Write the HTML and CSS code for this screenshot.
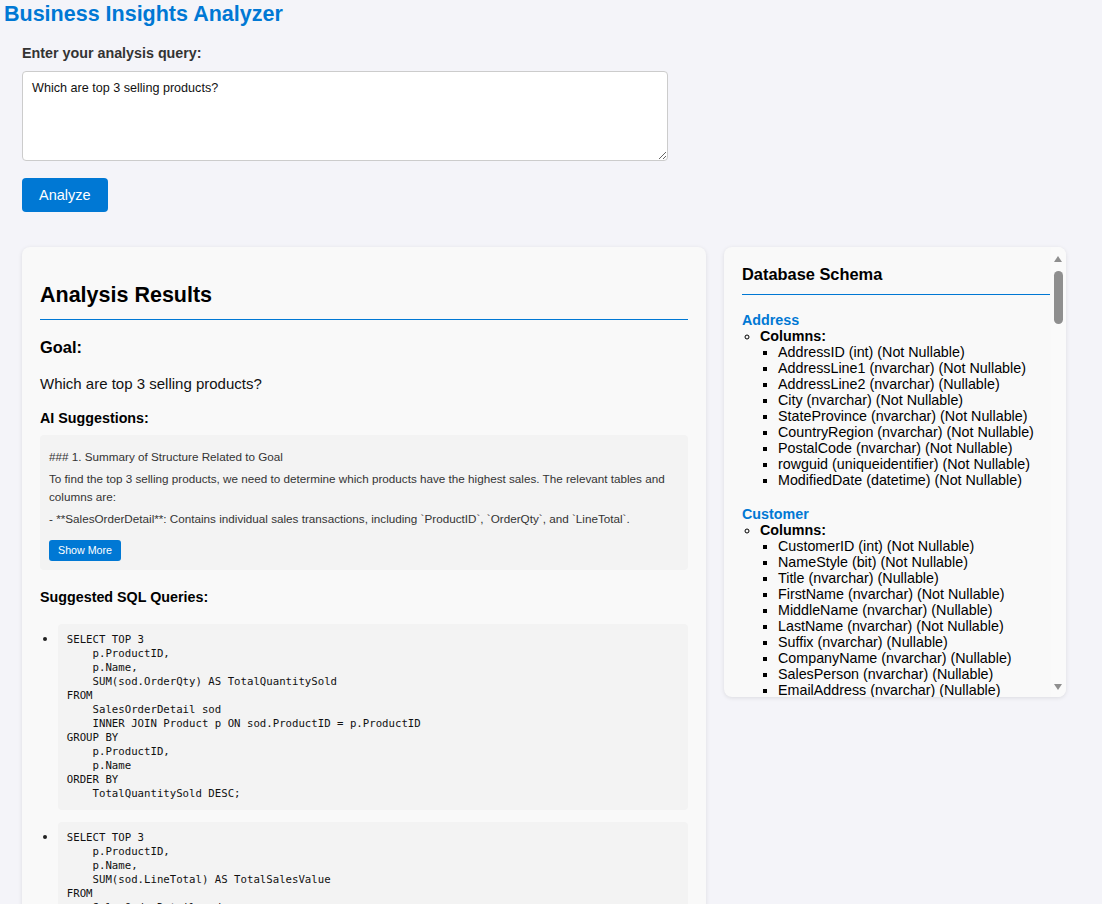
FILE: index.html
```html
<!DOCTYPE html>
<html lang="en">
<head>
<meta charset="utf-8">
<title>Business Insights Analyzer</title>
<link rel="stylesheet" href="styles.css">
</head>
<body>
<h1 class="app-title">Business Insights Analyzer</h1>
<div class="wrapper">
  <div class="query-form">
    <label class="query-label" for="q">Enter your analysis query:</label>
    <textarea id="q" class="query-input">Which are top 3 selling products?</textarea>
    <button class="analyze-btn">Analyze</button>
  </div>

  <div class="panels">
    <section class="card results">
      <h2 class="results-title">Analysis Results</h2>
      <h3 class="goal-title">Goal:</h3>
      <p class="goal-text">Which are top 3 selling products?</p>
      <h4 class="sub-title ai-title">AI Suggestions:</h4>
      <div class="suggestion-box">
        <p>### 1. Summary of Structure Related to Goal</p>
        <p>To find the top 3 selling products, we need to determine which products have the highest sales. The relevant tables and columns are:</p>
        <p>- **SalesOrderDetail**: Contains individual sales transactions, including `ProductID`, `OrderQty`, and `LineTotal`.</p>
        <button class="show-more">Show More</button>
      </div>
      <h4 class="sub-title sql-title">Suggested SQL Queries:</h4>
      <ul class="sql-list">
        <li><pre class="sql">SELECT TOP 3
    p.ProductID,
    p.Name,
    SUM(sod.OrderQty) AS TotalQuantitySold
FROM
    SalesOrderDetail sod
    INNER JOIN Product p ON sod.ProductID = p.ProductID
GROUP BY
    p.ProductID,
    p.Name
ORDER BY
    TotalQuantitySold DESC;</pre></li>
        <li><pre class="sql">SELECT TOP 3
    p.ProductID,
    p.Name,
    SUM(sod.LineTotal) AS TotalSalesValue
FROM
    SalesOrderDetail sod
    INNER JOIN Product p ON sod.ProductID = p.ProductID
GROUP BY
    p.ProductID,
    p.Name
ORDER BY
    TotalSalesValue DESC;</pre></li>
      </ul>
    </section>

    <aside class="card schema">
      <div class="schema-scroll">
        <h3 class="schema-title">Database Schema</h3>

        <div class="table">
          <h4 class="table-name">Address</h4>
          <ul class="col-group"><li><strong>Columns:</strong>
            <ul class="cols">
              <li>AddressID (int) (Not Nullable)</li>
              <li>AddressLine1 (nvarchar) (Not Nullable)</li>
              <li>AddressLine2 (nvarchar) (Nullable)</li>
              <li>City (nvarchar) (Not Nullable)</li>
              <li>StateProvince (nvarchar) (Not Nullable)</li>
              <li>CountryRegion (nvarchar) (Not Nullable)</li>
              <li>PostalCode (nvarchar) (Not Nullable)</li>
              <li>rowguid (uniqueidentifier) (Not Nullable)</li>
              <li>ModifiedDate (datetime) (Not Nullable)</li>
            </ul></li></ul>
        </div>

        <div class="table">
          <h4 class="table-name">Customer</h4>
          <ul class="col-group"><li><strong>Columns:</strong>
            <ul class="cols">
              <li>CustomerID (int) (Not Nullable)</li>
              <li>NameStyle (bit) (Not Nullable)</li>
              <li>Title (nvarchar) (Nullable)</li>
              <li>FirstName (nvarchar) (Not Nullable)</li>
              <li>MiddleName (nvarchar) (Nullable)</li>
              <li>LastName (nvarchar) (Not Nullable)</li>
              <li>Suffix (nvarchar) (Nullable)</li>
              <li>CompanyName (nvarchar) (Nullable)</li>
              <li>SalesPerson (nvarchar) (Nullable)</li>
              <li>EmailAddress (nvarchar) (Nullable)</li>
              <li>Phone (nvarchar) (Nullable)</li>
              <li>PasswordHash (varchar) (Not Nullable)</li>
              <li>PasswordSalt (varchar) (Not Nullable)</li>
              <li>rowguid (uniqueidentifier) (Not Nullable)</li>
              <li>ModifiedDate (datetime) (Not Nullable)</li>
            </ul></li></ul>
        </div>

        <div class="table">
          <h4 class="table-name">CustomerAddress</h4>
          <ul class="col-group"><li><strong>Columns:</strong>
            <ul class="cols">
              <li>CustomerID (int) (Not Nullable)</li>
              <li>AddressID (int) (Not Nullable)</li>
              <li>AddressType (nvarchar) (Not Nullable)</li>
              <li>rowguid (uniqueidentifier) (Not Nullable)</li>
              <li>ModifiedDate (datetime) (Not Nullable)</li>
            </ul></li></ul>
        </div>

        <div class="table">
          <h4 class="table-name">Product</h4>
          <ul class="col-group"><li><strong>Columns:</strong>
            <ul class="cols">
              <li>ProductID (int) (Not Nullable)</li>
              <li>Name (nvarchar) (Not Nullable)</li>
              <li>ProductNumber (nvarchar) (Not Nullable)</li>
              <li>Color (nvarchar) (Nullable)</li>
              <li>StandardCost (money) (Not Nullable)</li>
              <li>ListPrice (money) (Not Nullable)</li>
              <li>Size (nvarchar) (Nullable)</li>
              <li>Weight (decimal) (Nullable)</li>
              <li>ProductCategoryID (int) (Nullable)</li>
              <li>ProductModelID (int) (Nullable)</li>
              <li>SellStartDate (datetime) (Not Nullable)</li>
              <li>SellEndDate (datetime) (Nullable)</li>
              <li>DiscontinuedDate (datetime) (Nullable)</li>
              <li>ThumbNailPhoto (varbinary) (Nullable)</li>
              <li>ThumbnailPhotoFileName (nvarchar) (Nullable)</li>
              <li>rowguid (uniqueidentifier) (Not Nullable)</li>
              <li>ModifiedDate (datetime) (Not Nullable)</li>
            </ul></li></ul>
        </div>

        <div class="table">
          <h4 class="table-name">ProductCategory</h4>
          <ul class="col-group"><li><strong>Columns:</strong>
            <ul class="cols">
              <li>ProductCategoryID (int) (Not Nullable)</li>
              <li>ParentProductCategoryID (int) (Nullable)</li>
              <li>Name (nvarchar) (Not Nullable)</li>
              <li>rowguid (uniqueidentifier) (Not Nullable)</li>
              <li>ModifiedDate (datetime) (Not Nullable)</li>
            </ul></li></ul>
        </div>

        <div class="table">
          <h4 class="table-name">ProductDescription</h4>
          <ul class="col-group"><li><strong>Columns:</strong>
            <ul class="cols">
              <li>ProductDescriptionID (int) (Not Nullable)</li>
              <li>Description (nvarchar) (Not Nullable)</li>
              <li>rowguid (uniqueidentifier) (Not Nullable)</li>
              <li>ModifiedDate (datetime) (Not Nullable)</li>
            </ul></li></ul>
        </div>

        <div class="table">
          <h4 class="table-name">ProductModel</h4>
          <ul class="col-group"><li><strong>Columns:</strong>
            <ul class="cols">
              <li>ProductModelID (int) (Not Nullable)</li>
              <li>Name (nvarchar) (Not Nullable)</li>
              <li>CatalogDescription (xml) (Nullable)</li>
              <li>rowguid (uniqueidentifier) (Not Nullable)</li>
              <li>ModifiedDate (datetime) (Not Nullable)</li>
            </ul></li></ul>
        </div>

        <div class="table">
          <h4 class="table-name">ProductModelProductDescription</h4>
          <ul class="col-group"><li><strong>Columns:</strong>
            <ul class="cols">
              <li>ProductModelID (int) (Not Nullable)</li>
              <li>ProductDescriptionID (int) (Not Nullable)</li>
              <li>Culture (nchar) (Not Nullable)</li>
              <li>rowguid (uniqueidentifier) (Not Nullable)</li>
              <li>ModifiedDate (datetime) (Not Nullable)</li>
            </ul></li></ul>
        </div>

        <div class="table">
          <h4 class="table-name">SalesOrderDetail</h4>
          <ul class="col-group"><li><strong>Columns:</strong>
            <ul class="cols">
              <li>SalesOrderID (int) (Not Nullable)</li>
              <li>SalesOrderDetailID (int) (Not Nullable)</li>
              <li>OrderQty (smallint) (Not Nullable)</li>
              <li>ProductID (int) (Not Nullable)</li>
              <li>UnitPrice (money) (Not Nullable)</li>
              <li>UnitPriceDiscount (money) (Not Nullable)</li>
              <li>LineTotal (numeric) (Not Nullable)</li>
              <li>rowguid (uniqueidentifier) (Not Nullable)</li>
              <li>ModifiedDate (datetime) (Not Nullable)</li>
            </ul></li></ul>
        </div>

        <div class="table">
          <h4 class="table-name">SalesOrderHeader</h4>
          <ul class="col-group"><li><strong>Columns:</strong>
            <ul class="cols">
              <li>SalesOrderID (int) (Not Nullable)</li>
              <li>RevisionNumber (tinyint) (Not Nullable)</li>
              <li>OrderDate (datetime) (Not Nullable)</li>
              <li>DueDate (datetime) (Not Nullable)</li>
              <li>ShipDate (datetime) (Nullable)</li>
              <li>Status (tinyint) (Not Nullable)</li>
              <li>OnlineOrderFlag (bit) (Not Nullable)</li>
              <li>SalesOrderNumber (nvarchar) (Not Nullable)</li>
              <li>PurchaseOrderNumber (nvarchar) (Nullable)</li>
              <li>AccountNumber (nvarchar) (Nullable)</li>
              <li>CustomerID (int) (Not Nullable)</li>
              <li>ShipToAddressID (int) (Nullable)</li>
              <li>BillToAddressID (int) (Nullable)</li>
              <li>ShipMethod (nvarchar) (Not Nullable)</li>
              <li>CreditCardApprovalCode (varchar) (Nullable)</li>
              <li>SubTotal (money) (Not Nullable)</li>
              <li>TaxAmt (money) (Not Nullable)</li>
              <li>Freight (money) (Not Nullable)</li>
              <li>TotalDue (money) (Not Nullable)</li>
              <li>Comment (nvarchar) (Nullable)</li>
              <li>rowguid (uniqueidentifier) (Not Nullable)</li>
              <li>ModifiedDate (datetime) (Not Nullable)</li>
            </ul></li></ul>
        </div>

        <div class="table">
          <h4 class="table-name">vGetAllCategories</h4>
          <ul class="col-group"><li><strong>Columns:</strong>
            <ul class="cols">
              <li>ParentProductCategoryName (nvarchar) (Not Nullable)</li>
              <li>ProductCategoryName (nvarchar) (Nullable)</li>
              <li>ProductCategoryID (int) (Nullable)</li>
            </ul></li></ul>
        </div>

        <div class="table">
          <h4 class="table-name">vProductAndDescription</h4>
          <ul class="col-group"><li><strong>Columns:</strong>
            <ul class="cols">
              <li>ProductID (int) (Not Nullable)</li>
              <li>Name (nvarchar) (Not Nullable)</li>
              <li>ProductModel (nvarchar) (Not Nullable)</li>
              <li>Culture (nchar) (Not Nullable)</li>
              <li>Description (nvarchar) (Not Nullable)</li>
            </ul></li></ul>
        </div>

        <div class="table">
          <h4 class="table-name">vProductModelCatalogDescription</h4>
          <ul class="col-group"><li><strong>Columns:</strong>
            <ul class="cols">
              <li>ProductModelID (int) (Not Nullable)</li>
              <li>Name (nvarchar) (Not Nullable)</li>
              <li>Summary (nvarchar) (Nullable)</li>
              <li>Manufacturer (nvarchar) (Nullable)</li>
              <li>Copyright (nvarchar) (Nullable)</li>
              <li>ProductURL (nvarchar) (Nullable)</li>
              <li>WarrantyPeriod (nvarchar) (Nullable)</li>
              <li>WarrantyDescription (nvarchar) (Nullable)</li>
              <li>NoOfYears (nvarchar) (Nullable)</li>
              <li>MaintenanceDescription (nvarchar) (Nullable)</li>
              <li>Wheel (nvarchar) (Nullable)</li>
              <li>Saddle (nvarchar) (Nullable)</li>
              <li>Pedal (nvarchar) (Nullable)</li>
              <li>BikeFrame (nvarchar) (Nullable)</li>
              <li>Crankset (nvarchar) (Nullable)</li>
              <li>PictureAngle (nvarchar) (Nullable)</li>
              <li>PictureSize (nvarchar) (Nullable)</li>
              <li>ProductPhotoID (nvarchar) (Nullable)</li>
              <li>Material (nvarchar) (Nullable)</li>
              <li>Color (nvarchar) (Nullable)</li>
              <li>ProductLine (nvarchar) (Nullable)</li>
              <li>Style (nvarchar) (Nullable)</li>
              <li>RiderExperience (nvarchar) (Nullable)</li>
              <li>rowguid (uniqueidentifier) (Not Nullable)</li>
              <li>ModifiedDate (datetime) (Not Nullable)</li>
            </ul></li></ul>
        </div>
      </div>
      <div class="scrollbar" aria-hidden="true">
        <span class="sb-up"></span>
        <span class="sb-thumb"></span>
        <span class="sb-down"></span>
      </div>
    </aside>
  </div>
</div>
</body>
</html>
```
FILE: styles.css
```css
html {
  scrollbar-width: none;
}

body {
  margin: 0;
  background: #f4f4f9;
  color: #222;
  font-family: "Liberation Sans", Arial, sans-serif;
  font-size: 14.3px;
}

.app-title {
  margin: 2px 0 0 4px;
  font-size: 21.5px;
  line-height: 25px;
  font-weight: bold;
  color: #0078d4;
}

.wrapper {
  padding: 0 36px 60px 22px;
}

.query-form {
  display: flex;
  flex-direction: column;
  align-items: flex-start;
}

.query-label {
  margin-top: 18px;
  font-weight: bold;
  font-size: 14.3px;
  line-height: 16px;
  color: #333;
}

.query-input {
  display: block;
  box-sizing: border-box;
  width: 646px;
  height: 90px;
  margin: 10px 0 17px;
  padding: 9px;
  border: 1px solid #ccc;
  border-radius: 4px;
  background: #fff;
  font-family: "Liberation Sans", Arial, sans-serif;
  font-size: 12.6px;
  line-height: 15px;
  color: #111;
}

.analyze-btn {
  height: 34px;
  padding: 0 17px;
  border: none;
  border-radius: 4px;
  background: #0078d4;
  color: #fff;
  font-family: "Liberation Sans", Arial, sans-serif;
  font-size: 14.5px;
}

.panels {
  display: grid;
  grid-template-columns: 2fr 1fr;
  align-items: start;
  gap: 18px;
  margin-top: 35px;
}

.card {
  box-sizing: border-box;
  background: #f9f9f9;
  border-radius: 8px;
  box-shadow: 0 1px 4px rgba(0, 0, 0, 0.1);
}

.results {
  min-width: 0;
  padding: 18px 18px 30px;
}

.results-title {
  margin: 18px 0 0;
  padding-bottom: 11px;
  border-bottom: 1px solid #0078d4;
  font-size: 21.5px;
  line-height: 25px;
  color: #000;
}

.goal-title {
  margin: 18px 0 0;
  font-size: 16.4px;
  line-height: 19px;
  color: #000;
}

.goal-text {
  margin: 17.7px 0 0;
  font-size: 15px;
  line-height: 17px;
  color: #111;
}

.sub-title {
  margin: 0;
  font-size: 14.3px;
  line-height: 16px;
  color: #000;
}

.ai-title {
  margin-top: 18px;
}

.suggestion-box {
  margin-top: 9px;
  padding: 8px 9px 9px;
  background: #f3f3f3;
  border-radius: 4px;
  font-size: 11.7px;
  line-height: 17.4px;
  color: #333;
}

.suggestion-box p {
  margin: 5px 0;
}

.show-more {
  display: block;
  margin-top: 13px;
  padding: 4px 9px;
  border: none;
  border-radius: 3px;
  background: #0078d4;
  color: #fff;
  font-family: "Liberation Sans", Arial, sans-serif;
  font-size: 10.7px;
  line-height: 12.65px;
}

.sql-title {
  margin-top: 19.5px;
}

.sql-list {
  margin: 19px 0 0;
  padding-left: 18.3px;
}

.sql {
  margin: 0 0 12px;
  padding: 9px 9px 9px 8.5px;
  background: #f3f3f3;
  border-radius: 4px;
  font-family: "DejaVu Sans Mono", "Liberation Mono", monospace;
  font-size: 10.7px;
  line-height: 14px;
  color: #111;
}

.schema {
  position: relative;
  min-width: 0;
  height: 450px;
  overflow: hidden;
  color: #000;
}

.schema-scroll {
  box-sizing: border-box;
  height: 100%;
  overflow-y: auto;
  scrollbar-width: none;
  padding: 18px 16px 18px 18px;
}

.scrollbar {
  position: absolute;
  top: 0;
  right: 0;
  bottom: 0;
  width: 15px;
  background: #fafafa;
}

.sb-up,
.sb-down {
  position: absolute;
  left: 3px;
  width: 0;
  height: 0;
  border-left: 4.5px solid transparent;
  border-right: 4.5px solid transparent;
}

.sb-up {
  top: 9px;
  border-bottom: 6px solid #8f8f8f;
}

.sb-down {
  bottom: 7px;
  border-top: 6px solid #8f8f8f;
}

.sb-thumb {
  position: absolute;
  top: 24px;
  left: 3px;
  width: 9px;
  height: 53px;
  border-radius: 4.5px;
  background: #8f8f8f;
}

.schema-title {
  margin: 0;
  padding-bottom: 10px;
  border-bottom: 1px solid #0078d4;
  font-size: 16.4px;
  line-height: 19px;
}

.table {
  margin-top: 18.5px;
}

.schema-title + .table {
  margin-top: 16.7px;
}

.table-name {
  margin: 0;
  font-size: 14.3px;
  line-height: 16px;
  color: #0078d4;
}

.col-group {
  margin: 0;
  padding-left: 18px;
  list-style-type: circle;
  font-size: 14.3px;
  line-height: 16px;
}

.cols {
  margin: 0;
  padding-left: 18px;
  list-style-type: square;
}
```
